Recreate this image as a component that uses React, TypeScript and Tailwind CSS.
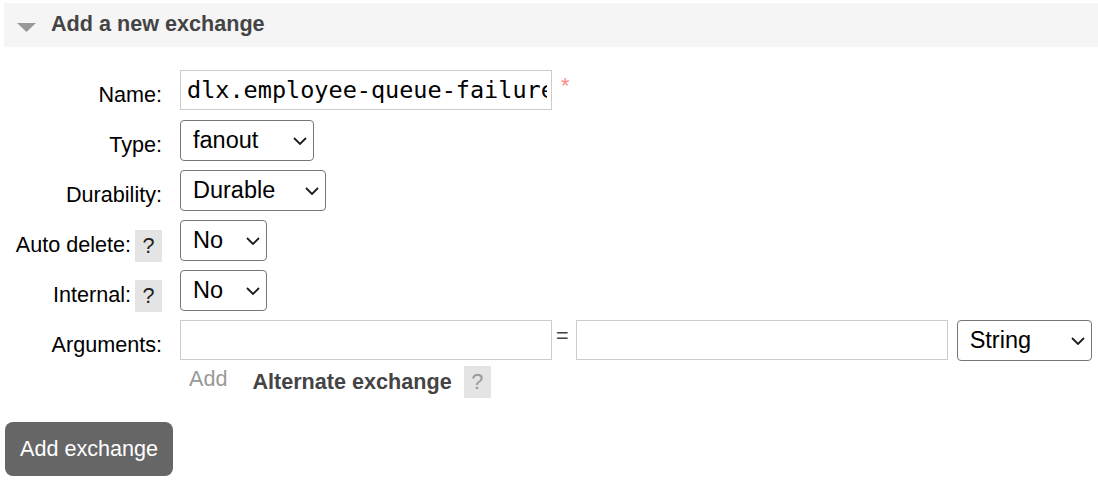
import React from "react";

const sans = { fontFamily: '"Liberation Sans", Arial, sans-serif' };

function Chevron() {
  return (
    <svg
      width="14"
      height="8"
      viewBox="0 0 14 8"
      className="pointer-events-none absolute right-[7px] top-1/2 -translate-y-1/2"
    >
      <polyline points="1,1 7,7 13,1" fill="none" stroke="#1c1c1c" strokeWidth="1.8" />
    </svg>
  );
}

function Select({ value, className }: { value: string; className: string }) {
  return (
    <div className="relative">
      <select
        defaultValue={value}
        className={`${className} h-[41px] appearance-none rounded-[4px] border border-[#767676] bg-white pl-[12px] text-[23.5px] text-black outline-none`}
        style={sans}
      >
        <option>{value}</option>
      </select>
      <Chevron />
    </div>
  );
}

function Help({ muted }: { muted?: boolean }) {
  return (
    <span
      className={`inline-block h-[32px] w-[27px] bg-[#e4e4e4] text-center text-[21.6px] leading-[32px] ${
        muted ? "text-[#999]" : "text-[#222]"
      }`}
    >
      ?
    </span>
  );
}

function Row({
  label,
  help,
  children,
  height = "h-[50px]",
}: {
  label: string;
  help?: boolean;
  children: React.ReactNode;
  height?: string;
}) {
  return (
    <div className={`flex ${height}`}>
      <div className="flex w-[162px] shrink-0 items-start justify-end">
        <span className="pt-[13px] text-[21.6px] leading-[24px] text-black">{label}</span>
        {help && (
          <span className="ml-[4px] mt-[10px]">
            <Help />
          </span>
        )}
      </div>
      <div className="ml-[18px] flex items-start">{children}</div>
    </div>
  );
}

export default function App() {
  return (
    <div className="h-[484px] w-[1098px] overflow-hidden bg-white" style={sans}>
      <div className="ml-[4px] mt-[3px] flex h-[44px] items-start bg-[#f5f5f5]">
        <svg width="19" height="9" viewBox="0 0 19 9" className="ml-[13px] mt-[20px]">
          <polygon points="0,0 19,0 9.5,9" fill="#999" />
        </svg>
        <h2 className="ml-[15px] mt-[9px] text-[21.6px] font-bold leading-[24px] text-[#444]">
          Add a new exchange
        </h2>
      </div>

      <div className="mt-[23px] flex flex-col">
        <Row label="Name:">
          <input
            readOnly
            value="dlx.employee-queue-failure"
            className="h-[40px] w-[372px] border border-[#ccc] bg-white pl-[6px] pr-[4px] text-[23.5px] text-black outline-none"
            style={{ fontFamily: '"DejaVu Sans Mono", monospace' }}
          />
          <span className="ml-[9px] pt-[4px] text-[21.6px] leading-[24px] text-[#f88]">*</span>
        </Row>
        <Row label="Type:">
          <Select value="fanout" className="w-[134px]" />
        </Row>
        <Row label="Durability:">
          <Select value="Durable" className="w-[146px]" />
        </Row>
        <Row label="Auto delete:" help>
          <Select value="No" className="w-[87px]" />
        </Row>
        <Row label="Internal:" help>
          <Select value="No" className="w-[87px]" />
        </Row>
        <Row label="Arguments:" height="h-[46px]">
          <input
            readOnly
            className="h-[40px] w-[372px] border border-[#ccc] bg-white outline-none"
          />
          <span className="ml-[4px] pt-[4px] text-[21.6px] leading-[24px] text-[#444]">=</span>
          <input
            readOnly
            className="ml-[7px] h-[40px] w-[372px] border border-[#ccc] bg-white outline-none"
          />
          <div className="ml-[9px]">
            <Select value="String" className="w-[135px]" />
          </div>
        </Row>
        <div className="flex h-[32px] pl-[189px]">
          <span className="pt-[1px] text-[21.6px] leading-[24px] text-[#999]">Add</span>
          <span className="ml-[25px] pt-[4px] text-[21.6px] font-bold leading-[24px] text-[#444]">
            Alternate exchange
          </span>
          <span className="ml-[12px]">
            <Help muted />
          </span>
        </div>
      </div>

      <button className="ml-[5px] mt-[24px] h-[54px] rounded-[8px] bg-[#666] px-[15px] text-[21.6px] text-white">
        Add exchange
      </button>
    </div>
  );
}
